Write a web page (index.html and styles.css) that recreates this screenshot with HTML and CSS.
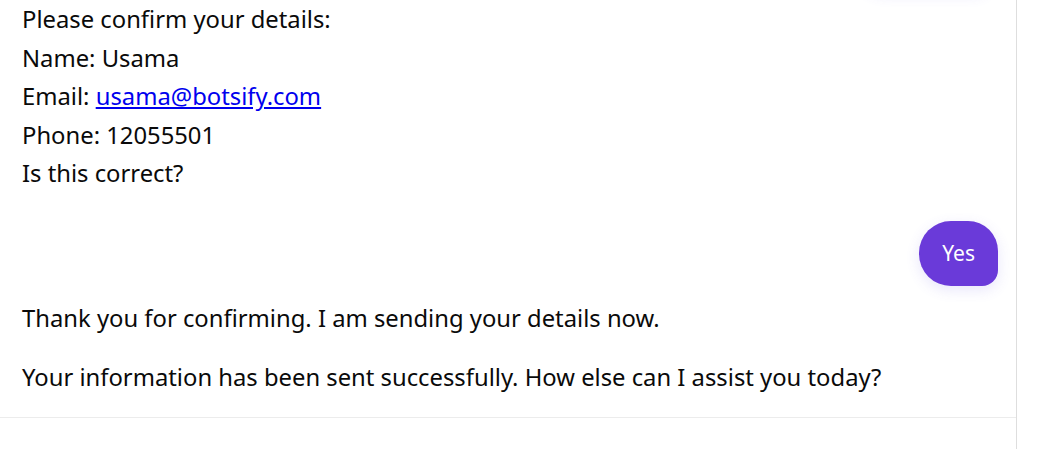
FILE: index.html
```html
<!DOCTYPE html>
<html lang="en">
<head>
<meta charset="utf-8">
<title>Chat</title>
<link rel="stylesheet" href="styles.css">
</head>
<body>
<div class="panel">
  <div class="messages">
    <div class="msg user"><span class="bubble ghost"></span></div>
    <div class="msg bot first">
      Please confirm your details:<br>
      Name: Usama<br>
      Email: <a href="#">usama@botsify.com</a><br>
      Phone: 12055501<br>
      Is this correct?
    </div>
    <div class="msg user yes"><span class="bubble">Yes</span></div>
    <div class="msg bot thanks">Thank you for confirming. I am sending your details now.</div>
    <div class="msg bot sent">Your information has been sent successfully. How else can I assist you today?</div>
  </div>
  <div class="composer"></div>
</div>
</body>
</html>
```
FILE: styles.css
```css
html, body {
  margin: 0;
  padding: 0;
  background: #fff;
}
body {
  font-family: "Noto Sans", "Open Sans", sans-serif;
  color: #0a0a0a;
  width: 1041px;
  height: 449px;
  overflow: hidden;
}
.panel {
  width: 1016px;
  height: 449px;
  border-right: 1px solid #dedede;
  display: flex;
  flex-direction: column;
}
.messages {
  height: 417px;
  overflow: hidden;
  display: flex;
  flex-direction: column;
  justify-content: flex-end;
  padding: 0 18px 21px 22px;
  box-sizing: border-box;
  flex-shrink: 0;
}
.msg {
  font-size: 23.8px;
  line-height: 38.5px;
}
.msg a {
  color: #0000ee;
  text-decoration: underline;
}
.user {
  display: flex;
  justify-content: flex-end;
}
.bubble {
  background: #6a3ad9;
  color: #fff;
  font-size: 21px;
  padding: 18px 23px;
  line-height: 29px;
  border-radius: 32px 30px 16px 32px;
  box-shadow: 0 4px 14px rgba(90, 80, 230, 0.14);
}
.ghost {
  display: block;
  width: 90px;
  height: 29px;
  margin-right: 8px;
  background: #fff;
}
.first {
  margin-top: 9px;
}
.yes {
  margin-top: 28px;
}
.thanks {
  margin-top: 13px;
}
.sent {
  margin-top: 20.5px;
}
.composer {
  border-top: 1px solid #ececec;
  flex: 1;
}
```
